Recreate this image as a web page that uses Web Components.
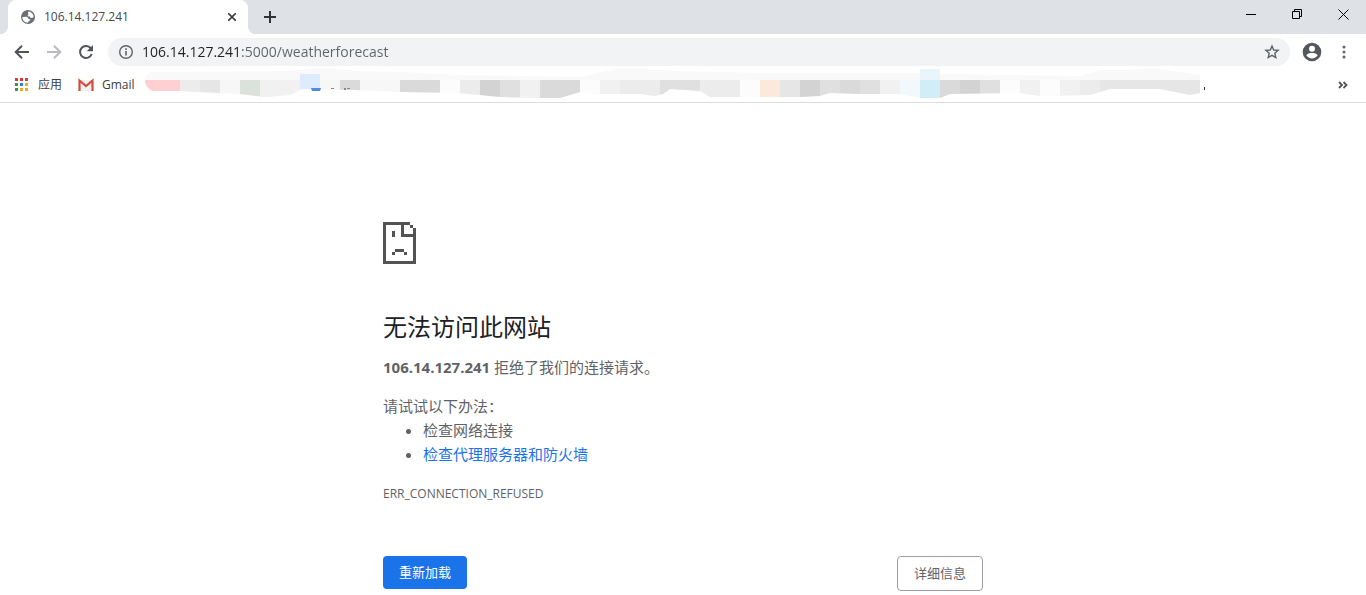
<!DOCTYPE html>
<html lang="zh-CN">
<head>
<meta charset="utf-8">
<title>106.14.127.241</title>
<style>
body { margin: 0; background: #fff; font-family: "Open Sans", "Noto Sans CJK SC", sans-serif; }
</style>
</head>
<body>
<browser-window>
  <tab-strip slot="chrome"><browser-tab>106.14.127.241</browser-tab></tab-strip>
  <nav-bar slot="chrome" url="106.14.127.241:5000/weatherforecast"></nav-bar>
  <bookmarks-bar slot="chrome"></bookmarks-bar>
  <error-page></error-page>
</browser-window>

<script>
function define(name, markup, ready) {
  const template = document.createElement('template');
  template.innerHTML = '<style>*,:host{box-sizing:border-box}button{font:inherit;color:inherit;border:0;background:none;padding:0;margin:0;display:grid;place-items:center}svg{display:block}</style>' + markup;
  customElements.define(name, class extends HTMLElement {
    connectedCallback() {
      if (this.shadowRoot) return;
      this.attachShadow({ mode: 'open' }).append(template.content.cloneNode(true));
      if (ready) ready(this, this.shadowRoot);
    }
  });
}

define('browser-window', `
<style>
:host { display: flex; flex-direction: column; min-height: 100vh; }
header { border-bottom: 1px solid #dadce0; }
</style>
<header><slot name="chrome"></slot></header>
<main><slot></slot></main>`);

define('tab-strip', `
<style>
:host { display: flex; height: 34px; padding-left: 8px; background: #dee1e6; color: #202124; }
.new { width: 28px; height: 34px; margin-left: 8px; }
.controls { display: flex; margin-left: auto; }
.controls button { width: 46px; height: 28px; }
</style>
<slot></slot>
<button class="new" aria-label="新标签页"><svg width="12" height="12" viewBox="0 0 12 12" stroke="#303236" stroke-width="2"><path d="M6 0v12M0 6h12"/></svg></button>
<div class="controls">
  <button aria-label="最小化"><svg width="10" height="10" viewBox="0 0 10 10" stroke="#000"><path d="M0 5.500h10"/></svg></button>
  <button aria-label="还原"><svg width="10" height="10" viewBox="0 0 10 10" fill="none" stroke="#000"><path d="M.5 2.500h7v7h-7zM2.500 2.500v-2h7v7h-2"/></svg></button>
  <button aria-label="关闭"><svg width="11" height="11" viewBox="0 0 11 11" stroke="#000"><path d="M.5.5l10 10M10.500.5l-10 10"/></svg></button>
</div>`);

define('browser-tab', `
<style>
:host { position: relative; display: flex; align-items: center; gap: 8px; width: 240px; padding: 0 8px 0 12px; background: #fff; border-radius: 8px 8px 0 0; font-size: 12px; line-height: 16px; color: #45494d; }
:host::before, :host::after { content: ""; position: absolute; bottom: 0; width: 8px; height: 8px; }
:host::before { left: -8px; background: radial-gradient(circle at 0 0, #dee1e6 8px, #fff 8px); }
:host::after { right: -8px; background: radial-gradient(circle at 100% 0, #dee1e6 8px, #fff 8px); }
.title { flex: 1; }
button { width: 16px; height: 16px; }
</style>
<svg width="16" height="16" viewBox="0 0 16 16"><circle cx="8" cy="8" r="7" fill="#6b6f73"/><path d="M2.300 8.200C3.500 7.600 5.600 7.500 7.200 8c1.100.4.900 1.500 1.500 1.900.6.300 1.700-.1 1.700.8 0 1-1.400 1-1.900 1.700-.3.500-.3.900-.9 1.300C4.700 13.600 2.200 11.200 2.300 8.200zM8.600 2.400c2.800.3 5 2.700 5 5.600-.8.900-2 1.100-2.900.7-.6-.3-.5-1.100-1.100-1.300-.7-.2-1.500.1-1.800-.5-.4-.8.500-1.100.6-1.700.1-.7-.6-1-.4-1.700.1-.4.400-.7.600-1.100z" fill="#fff"/></svg>
<span class="title"><slot></slot></span>
<button aria-label="关闭标签页"><svg width="8" height="8" viewBox="0 0 8 8" stroke="#3c4043" stroke-width="1.600"><path d="M0 0l8 8M8 0L0 8"/></svg></button>`);

define('nav-bar', `
<style>
:host { display: flex; align-items: center; height: 36px; padding: 0 12px 0 8px; color: #5f6368; }
.tool { width: 28px; height: 28px; margin-right: 4px; }
.box { flex: 1; display: flex; align-items: center; height: 28px; margin-left: 4px; padding: 0 10px; gap: 8px; border-radius: 14px; background: #f1f3f4; }
input { flex: 1; min-width: 0; height: 28px; border: 0; padding: 0; outline: 0; font: 14px/28px "Open Sans", sans-serif; background: linear-gradient(90deg, #202124 100px, #5f6368 100px); background-clip: text; -webkit-background-clip: text; -webkit-text-fill-color: transparent; }
.profile { width: 28px; height: 28px; margin-left: 8px; }
.menu { width: 20px; height: 28px; margin-left: 8px; }
</style>
<button class="tool" aria-label="后退"><svg width="16" height="16" viewBox="0 0 16 16" fill="none" stroke="#505458" stroke-width="2"><path d="M15 8H2.500M8 1.700L1.700 8 8 14.300"/></svg></button>
<button class="tool" aria-label="前进"><svg width="16" height="16" viewBox="0 0 16 16" fill="none" stroke="#b9bbbe" stroke-width="2"><path d="M1 8h12.500M8 1.700L14.300 8 8 14.300"/></svg></button>
<button class="tool" aria-label="重新加载"><svg width="16" height="16" viewBox="0 0 16 16"><path d="M12.800 4.300A6 6 0 1 0 13.700 10" fill="none" stroke="#505458" stroke-width="2"/><path d="M15 1v6.300H8.700z" fill="#505458"/></svg></button>
<div class="box">
  <svg width="16" height="16" viewBox="0 0 16 16" fill="none" stroke="#5f6368"><circle cx="8" cy="8" r="6.300" stroke-width="1.400"/><path d="M8 7v4.500M8 4.300v1.600" stroke-width="1.600"/></svg>
  <input type="text" aria-label="地址和搜索栏" spellcheck="false">
  <button aria-label="为此网页添加书签"><svg width="16" height="16" viewBox="0 0 16 16" fill="none" stroke="#5f6368" stroke-width="1.400"><path d="M8 2l1.700 4 4.400.4-3.300 2.900 1 4.300L8 11.300l-3.800 2.300 1-4.300L1.900 6.400 6.300 6z"/></svg></button>
</div>
<button class="profile" aria-label="个人资料"><svg width="20" height="20" viewBox="0 0 20 20"><circle cx="10" cy="10" r="9.300" fill="#54585c"/><circle cx="10" cy="6.700" r="3" fill="#fff"/><path d="M4.300 13.300c1-1.700 3.200-2.300 5.700-2.300s4.700.6 5.700 2.300C14.500 15.300 12.400 16.500 10 16.500s-4.500-1.200-5.700-3.200z" fill="#fff"/></svg></button>
<button class="menu" aria-label="自定义及控制"><svg width="4" height="14" viewBox="0 0 4 14" fill="#5f6368"><circle cx="2" cy="2" r="1.500"/><circle cx="2" cy="7" r="1.500"/><circle cx="2" cy="12" r="1.500"/></svg></button>`,
(host, root) => { root.querySelector('input').value = host.getAttribute('url'); });

define('bookmarks-bar', `
<style>
:host { display: flex; align-items: center; height: 32px; padding: 0 18px 2px 14px; font-size: 12px; line-height: 16px; color: #3c4043; }
a { display: flex; align-items: center; gap: 8px; margin-right: 16px; color: inherit; text-decoration: none; }
a + a { margin-right: 8px; }
.hidden-items { flex: 1; min-width: 0; overflow: hidden; }
</style>
<a href="#apps"><svg width="16" height="16" viewBox="0 0 16 16"><path d="M1 1h3v3H1zM6 1h3v3H6zM11 1h3v3h-3z" fill="#d93a3a"/><path d="M1 6h3v3H1zM1 11h3v3H1z" fill="#35984d"/><path d="M6 6h3v3H6z" fill="#3978e6"/><path d="M11 6h3v3h-3zM6 11h3v3H6zM11 11h3v3h-3z" fill="#e4ad24"/></svg>应用</a>
<a href="#gmail"><svg width="16" height="16" viewBox="0 0 16 16"><path d="M1 3h14v11H1z" fill="#f3f1f1"/><path d="M1.500 14V3.500L8 9l6.500-5.500V14" fill="none" stroke="#d54b3d" stroke-width="2.200"/></svg>Gmail</a>
<div class="hidden-items"><svg width="1070" height="32" viewBox="143 69 1070 32" aria-hidden="true">
  <defs><clipPath id="smear"><path d="M145 82L146 76 150 72 290 71 320 68 360 71 400 72 460 75 580 77 620 68 680 71 760 73 920 73 920 68 940 68 940 74 1080 76 1100 70 1160 69 1200 75 1200 93 1190 95 1160 89 1110 89 1090 95 1040 96 1020 93 950 94 940 98 920 98 900 94 860 94 830 93 820 96 800 97 710 97 700 91 670 89 663 94 655 96 640 94 600 94 580 92 560 98 540 98 500 97 480 95 460 93 400 92 355 90 302 89 290 95 265 97 240 94 218 93 180 91 152 91 147 87z"/></clipPath></defs>
  <g clip-path="url(#smear)" shape-rendering="crispEdges">
    <path d="M145 68h1055v12H145z" fill="#f9f9f9"/><path d="M145 80h1055v20H145z" fill="#f7f7f7"/>
    <path d="M145 80h35v20h-35z" fill="#ffcfd2"/>
    <path d="M180 80h20v20h-20zM460 80h20v20h-20zM620 80h40v20h-40zM700 80h40v20h-40zM1080 80h20v20h-20z" fill="#ececec"/>
    <path d="M200 80h20v20h-20zM780 80h20v20h-20zM1100 80h100v20h-100z" fill="#e6e6e6"/>
    <path d="M240 80h20v20h-20z" fill="#dbe2dc"/><path d="M300 74h20v26h-20z" fill="#deebff"/>
    <path d="M260 80h40v20h-40zM520 80h20v20h-20zM600 80h20v20h-20zM880 80h20v20h-20zM1020 80h20v20h-20zM1060 80h20v20h-20z" fill="#f1f1f1"/>
    <path d="M340 80h20v20h-20zM400 80h40v20h-40zM540 80h40v20h-40zM840 80h20v20h-20zM940 80h20v20h-20z" fill="#dadada"/>
    <path d="M480 80h20v20h-20zM800 80h20v20h-20zM960 80h20v20h-20z" fill="#d3d3d3"/>
    <path d="M500 80h20v20h-20zM660 80h40v20h-40zM820 80h20v20h-20zM860 80h20v20h-20zM980 80h20v20h-20z" fill="#e0e0e0"/>
    <path d="M440 80h20v20h-20zM580 80h20v20h-20zM740 80h20v20h-20zM1000 80h20v20h-20zM1040 80h20v20h-20z" fill="#fcfcfc"/>
    <path d="M760 80h20v20h-20z" fill="#fde8dc"/><path d="M900 80h20v20h-20z" fill="#f1f9fc"/><path d="M920 68h20v12h-20z" fill="#e8f6fb"/><path d="M920 80h20v20h-20z" fill="#d1edf6"/>
  </g>
  <path d="M311 88h10l-1 3h-8z" fill="#5489de"/><path d="M331 88h3v1h-3zM344 88h2v2h-2zM347 88h3v1h-3z" fill="#888"/><path d="M1204 87h1v3h-1z" fill="#333"/>
</svg></div>
<button aria-label="更多书签"><svg width="10" height="8" viewBox="0 0 10 8" fill="none" stroke="#505458" stroke-width="1.800"><path d="M1 1l3 3-3 3M5.500 1l3 3-3 3"/></svg></button>`);

define('error-page', `
<style>
:host { display: block; max-width: 600px; margin: 0 auto; padding-top: 119px; color: #5f6368; font-size: 15px; line-height: 24px; }
h1 { margin: 48px 0 13px; font-size: 24px; line-height: 30px; font-weight: 400; color: #202124; }
p { margin: 0 0 15px; }
p.tips { margin: 0; }
ul { margin: 0 0 16px; padding-left: 40px; }
a { color: #1a73e8; text-decoration: none; }
.code { font-size: 12px; margin: 0 0 50px; }
.actions { display: flex; justify-content: space-between; align-items: flex-start; }
.actions button { padding: 0 16px; border-radius: 4px; font-size: 13px; line-height: 33px; }
.reload { background: #1a73e8; color: #fff; }
.actions .details { border: 1px solid #9aa0a6; }
</style>
<svg width="33" height="42" viewBox="0 0 11 14" fill="#535353" shape-rendering="crispEdges" aria-hidden="true"><path d="M0 0h9v1H7v3h3v-2h1v12H0zM1 1v12h9V5H6V1zM9 1h1v1H9zM3 3h1v2H3zM4 9h3v1H4zM3 10h1v1H3zM7 10h1v1H7z" fill-rule="evenodd"/></svg>
<h1>无法访问此网站</h1>
<p><strong>106.14.127.241</strong> 拒绝了我们的连接请求。</p>
<p class="tips">请试试以下办法：</p>
<ul><li>检查网络连接</li><li><a href="#proxy">检查代理服务器和防火墙</a></li></ul>
<p class="code">ERR_CONNECTION_REFUSED</p>
<div class="actions"><button class="reload">重新加载</button><button class="details">详细信息</button></div>`);
</script>
</body>
</html>
